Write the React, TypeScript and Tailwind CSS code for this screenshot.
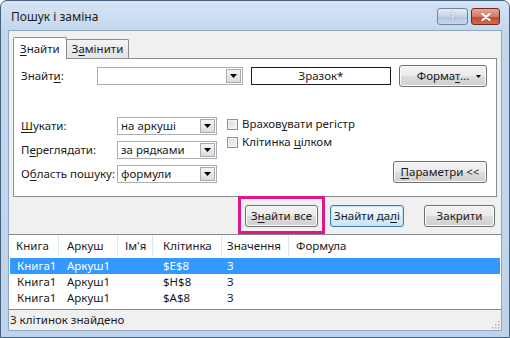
import React from 'react'

// Underlined access key letter
function K({ children }: { children: React.ReactNode }) {
  return <span className="underline underline-offset-[2px] decoration-[1px]">{children}</span>
}

function Arrow() {
  return (
    <svg width="7" height="4" viewBox="0 0 7 4">
      <path d="M0 0h7L3.5 4z" fill="#000" />
    </svg>
  )
}

function Combo({ value, className }: { value?: string; className: string }) {
  return (
    <div className={`h-[18px] flex items-stretch bg-white border border-[#abadb3] ${className}`}>
      <span className="flex-1 pl-[3px] flex items-center">{value}</span>
      <span className="w-[15px] m-[1px] flex items-center justify-center border border-[#a8abb2] bg-[linear-gradient(#f3f3f3,#dcdcdc)]">
        <Arrow />
      </span>
    </div>
  )
}

function Btn({ children, className, primary }: { children: React.ReactNode; className: string; primary?: boolean }) {
  return (
    <div
      className={`h-[22px] flex items-center justify-center rounded-[3px] border ${
        primary
          ? 'border-[#3c7fb1] shadow-[inset_0_0_0_1px_#c5e3f6] bg-[linear-gradient(#f4f9fd_0%,#e8f3fb_50%,#d8ebf8_51%,#cde4f5_100%)]'
          : 'border-[#707070] shadow-[inset_0_0_0_1px_#fbfbfb] bg-[linear-gradient(#f2f2f2_0%,#ebebeb_50%,#dddddd_51%,#cfcfcf_100%)]'
      } ${className}`}
    >
      {children}
    </div>
  )
}

function Check({ children }: { children: React.ReactNode }) {
  return (
    <div className="h-[18px] flex items-center gap-[4px]">
      <span className="w-[11px] h-[11px] border border-[#8f8f8f] bg-[linear-gradient(135deg,#dcdcdc,#f6f6f6)] shadow-[inset_0_0_0_1px_#f4f4f4]" />
      <span>{children}</span>
    </div>
  )
}

const ROWS = [
  { book: 'Книга1', sheet: 'Аркуш1', cell: '$E$8', value: '3', selected: true },
  { book: 'Книга1', sheet: 'Аркуш1', cell: '$H$8', value: '3' },
  { book: 'Книга1', sheet: 'Аркуш1', cell: '$A$8', value: '3' },
]

export default function App() {
  return (
    <div className="w-[510px] h-[338px] bg-white font-['Noto_Sans',sans-serif] text-[11.5px] leading-none text-[#1a1a1a]">
      <div className="w-full h-full flex flex-col rounded-t-[7px] border border-[#44617f] bg-[linear-gradient(#d6e4f4_0px,#c3d7ed_30px,#bfd3ea_100%)]">

        {/* Title bar */}
        <div className="h-[29px] shrink-0 flex items-start pt-[7px] pl-[10px] pr-[9px]">
          <span className="mt-[3px] text-[12px] text-[#1b1b1b]">Пошук і заміна</span>
          <div className="ml-auto flex items-center gap-[3px]">
            <div className="w-[31px] h-[17px] rounded-[3px] border border-[#6f84a0] bg-[linear-gradient(#e4edf7,#c3d4e8_50%,#b2c6de_51%,#c9d9ec)] flex items-center justify-center text-[11px] font-bold text-[#eef4fa] [text-shadow:0_0_1px_#51667f]">
              ?
            </div>
            <div className="w-[29px] h-[17px] rounded-[3px] border border-[#6b2b22] bg-[linear-gradient(#e8a493,#d57a66_50%,#c2472f_51%,#d4694f)] flex items-center justify-center">
              <svg width="10" height="8" viewBox="0 0 10 8">
                <path d="M1.5 1L8.5 7M8.5 1L1.5 7" stroke="#fff" strokeWidth="2.2" strokeLinecap="round" />
              </svg>
            </div>
          </div>
        </div>

        {/* Client area */}
        <div className="mx-[7px] h-[301px] shrink-0 flex flex-col bg-[#f0f0f0] border border-[#8fa6c1]">

          {/* Tabs */}
          <div className="pt-[6px] pl-[4px] h-[27px] flex items-end">
            <div className="h-[22px] px-[6px] flex items-center bg-white border border-b-0 border-[#898c95] rounded-t-[2px] relative z-10 mb-[-1px]">
              <span><K>З</K>найти</span>
            </div>
            <div className="h-[19px] px-[5px] flex items-center border border-l-0 border-b-0 border-[#898c95] rounded-tr-[2px] bg-[linear-gradient(#f3f3f3,#e3e3e3)]">
              <span>З<K>а</K>мінити</span>
            </div>
          </div>

          {/* Panel */}
          <div className="mx-[4px] h-[139px] bg-white border border-[#898c95] pl-[7px] pr-[9px] pt-[8px]">
            <div className="h-[18px] flex items-center">
              <span className="w-[76px]">Знайт<K>и</K>:</span>
              <Combo className="w-[146px]" />
              <div className="ml-[8px] w-[140px] h-[18px] border border-[#1a1a1a] flex items-center justify-center">Зразок*</div>
              <Btn className="ml-auto w-[88px] h-[18px]">
                <span className="flex-1 text-center pl-[10px]">Форма<K>т</K>...</span>
                <span className="pr-[5px] flex"><svg width="5" height="3" viewBox="0 0 5 3"><path d="M0 0h5L2.5 3z" fill="#000" /></svg></span>
              </Btn>
            </div>

            <div className="mt-[32px] flex">
              <div className="flex flex-col gap-[6px]">
                <div className="h-[18px] flex items-center">
                  <span className="w-[96px]"><K>Ш</K>укати:</span>
                  <Combo value="на аркуші" className="w-[100px]" />
                </div>
                <div className="h-[18px] flex items-center">
                  <span className="w-[96px]">П<K>е</K>реглядати:</span>
                  <Combo value="за рядками" className="w-[100px]" />
                </div>
                <div className="h-[18px] flex items-center">
                  <span className="w-[96px]">О<K>б</K>ласть пошуку:</span>
                  <Combo value="формули" className="w-[100px]" />
                </div>
              </div>
              <div className="ml-[10px] flex flex-col mt-[-2px]">
                <Check>Врахов<K>у</K>вати регістр</Check>
                <Check>Клітинка <K>ц</K>ілком</Check>
              </div>
              <div className="ml-auto flex items-end">
                <Btn className="w-[94px] h-[19px]"><span><K>П</K>араметри &lt;&lt;</span></Btn>
              </div>
            </div>
          </div>

          {/* Command buttons */}
          <div className="relative mt-[8px] h-[22px] flex justify-end pr-[6px]">
            <Btn className="w-[73px]"><span>З<K>н</K>айти все</span></Btn>
            <Btn primary className="ml-[12px] w-[74px]"><span>Знайти да<K>л</K>і</span></Btn>
            <Btn className="ml-[20px] w-[71px]"><span>Закрити</span></Btn>
            <div className="absolute left-[229px] top-[-9px] w-[87px] h-[38px] border-[3px] border-[#e0178c]" />
          </div>

          {/* Results list */}
          <div className="mt-[7px] h-[76px] bg-white border-y border-[#828790]">
            <div className="h-[22px] flex items-center">
              <span className="w-[50px] h-full pl-[7px] flex items-center border-r border-[#e2e5ea]">Книга</span>
              <span className="w-[59px] h-full pl-[8px] flex items-center border-r border-[#e2e5ea]">Аркуш</span>
              <span className="w-[35px] h-full pl-[7px] flex items-center border-r border-[#e2e5ea]">Ім'я</span>
              <span className="w-[69px] h-full pl-[10px] flex items-center border-r border-[#e2e5ea]">Клітинка</span>
              <span className="w-[67px] h-full pl-[5px] flex items-center border-r border-[#e2e5ea]">Значення</span>
              <span className="flex-1 h-full pl-[7px] flex items-center">Формула</span>
            </div>
            <div className="mt-[1px] flex flex-col">
              {ROWS.map((r, i) => (
                <div
                  key={i}
                  className={`h-[16px] mx-[1px] flex items-center ${r.selected ? 'bg-[#3399ff] text-white' : ''}`}
                >
                  <span className="w-[49px] pl-[7px]">{r.book}</span>
                  <span className="w-[59px] pl-[8px]">{r.sheet}</span>
                  <span className="w-[35px]" />
                  <span className="w-[69px] pl-[10px]">{r.cell}</span>
                  <span className="w-[67px] pl-[5px]">{r.value}</span>
                </div>
              ))}
            </div>
          </div>

          {/* Status bar */}
          <div className="h-[20px] flex items-center pl-[1px] relative">
            <span>3 клітинок знайдено</span>
            <svg className="absolute right-[1px] bottom-[1px]" width="10" height="10" viewBox="0 0 10 10">
              {[[8, 2], [8, 5], [5, 5], [8, 8], [5, 8], [2, 8]].map(([x, y], i) => (
                <rect key={i} x={x} y={y} width="1.5" height="1.5" fill="#b5b5b5" />
              ))}
            </svg>
          </div>
        </div>
      </div>
    </div>
  )
}
